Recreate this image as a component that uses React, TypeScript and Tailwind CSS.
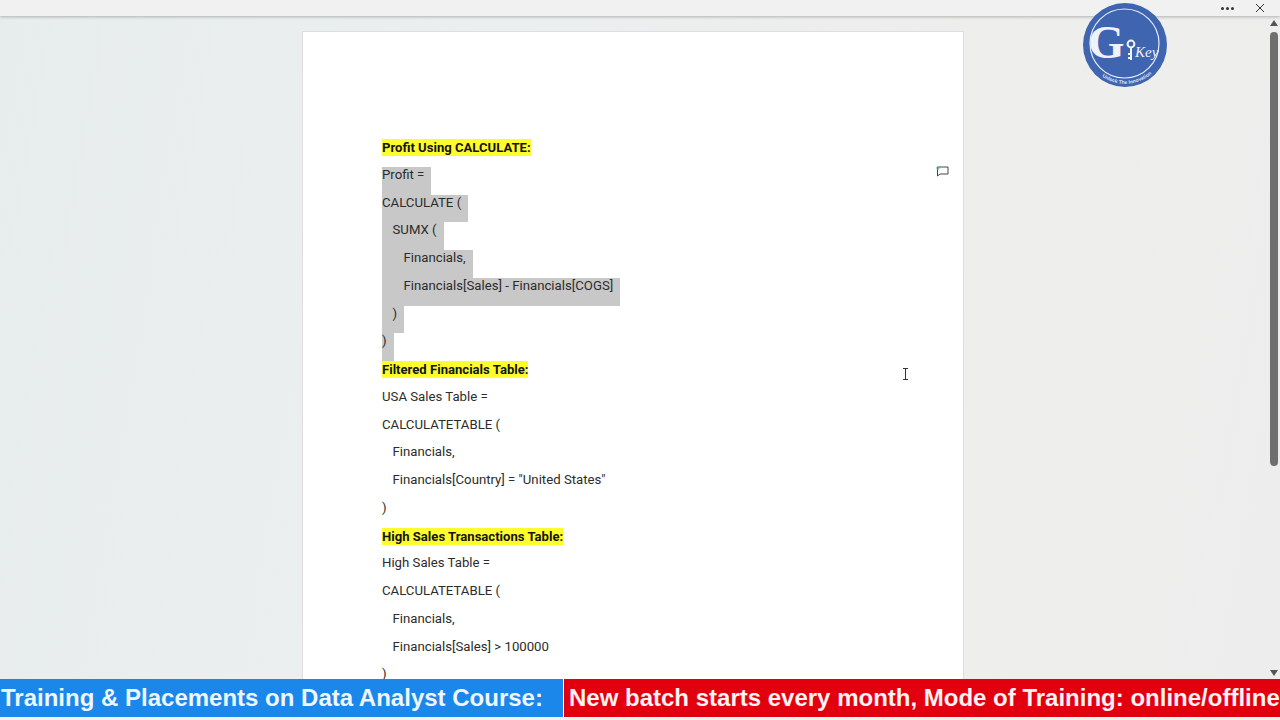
const F = "[font-family:'Roboto','Liberation_Sans',sans-serif]";

type Line = { t: string; kind?: "head" | "sel"; indent?: number };

const lines: Line[] = [
  { t: "Profit Using CALCULATE:", kind: "head" },
  { t: "Profit =", kind: "sel" },
  { t: "CALCULATE (", kind: "sel" },
  { t: "SUMX (", kind: "sel", indent: 10.5 },
  { t: "Financials,", kind: "sel", indent: 21.5 },
  { t: "Financials[Sales] - Financials[COGS]", kind: "sel", indent: 21.5 },
  { t: ")", kind: "sel", indent: 10.5 },
  { t: ")", kind: "sel" },
  { t: "Filtered Financials Table:", kind: "head" },
  { t: "USA Sales Table =" },
  { t: "CALCULATETABLE (" },
  { t: "Financials,", indent: 10.5 },
  { t: 'Financials[Country] = "United States"', indent: 10.5 },
  { t: ")" },
  { t: "High Sales Transactions Table:", kind: "head" },
  { t: "High Sales Table =" },
  { t: "CALCULATETABLE (" },
  { t: "Financials,", indent: 10.5 },
  { t: "Financials[Sales] > 100000", indent: 10.5 },
  { t: ")" },
];

function DocLine({ l }: { l: Line }) {
  if (l.kind === "head") {
    return (
      <div className="h-[27.75px] flex items-start">
        <span className="bg-[#fdfd2e] h-[17px] leading-[17px] font-bold text-[13.1px] text-[#141414]">{l.t}</span>
      </div>
    );
  }
  if (l.kind === "sel") {
    return (
      <div className="h-[27.75px] flex">
        <div className="bg-[#c8c8c8] h-full pr-[7px]" style={{ paddingLeft: l.indent ?? 0 }}>
          <span className="block h-[16px] leading-[16px] text-[13.2px] text-[#2c2c2c]">{l.t}</span>
        </div>
      </div>
    );
  }
  return (
    <div className="h-[27.75px]" style={{ paddingLeft: l.indent ?? 0 }}>
      <span className="block h-[16px] leading-[16px] text-[13.2px] text-[#2c2c2c]">{l.t}</span>
    </div>
  );
}

function Logo() {
  return (
    <svg viewBox="0 0 84 84" className="w-[84px] h-[84px]">
      <circle cx="42" cy="42" r="42" fill="#3f64b0" />
      <circle cx="41.5" cy="40.5" r="34.5" fill="none" stroke="#e8eef8" strokeWidth="1.2" />
      <text x="5" y="55" fill="#eef2fa" fontSize="47" fontWeight="700" fontFamily="'Liberation Serif',serif">G</text>
      <g fill="none" stroke="#f2f5fb" strokeWidth="2">
        <circle cx="48" cy="41" r="3.4" />
        <path d="M48 45 V57 M48 51 H45 M48 55 H45" />
      </g>
      <text x="52" y="54" fill="#eef2fa" fontSize="15" fontStyle="italic" fontFamily="'Liberation Serif',serif">Key</text>
      <path id="arc" d="M14 70 Q42 92 70 70" fill="none" />
      <text fontSize="5" fontWeight="700" fill="#dfe6f4" fontFamily="'Liberation Sans',sans-serif">
        <textPath href="#arc" startOffset="6">Unlock The Innovation</textPath>
      </text>
    </svg>
  );
}

export default function App() {
  return (
    <div className={`relative w-[1280px] h-[720px] overflow-hidden flex flex-col ${F} bg-[linear-gradient(100deg,#e7eced_0%,#ebefef_35%,#eeeeec_75%,#ededed_100%)]`}>
      {/* Top bar */}
      <div className="h-[16px] shrink-0 bg-[#f1f1f1] shadow-[0_1px_3px_rgba(0,0,0,0.25)] flex items-center justify-end z-10">
        <div className="flex gap-[2px] mr-[21px]">
          <span className="w-[3px] h-[3px] rounded-full bg-[#333]" />
          <span className="w-[3px] h-[3px] rounded-full bg-[#333]" />
          <span className="w-[3px] h-[3px] rounded-full bg-[#333]" />
        </div>
        <svg viewBox="0 0 10 10" className="w-[10px] h-[10px] mr-[15px]" stroke="#333" strokeWidth="1" fill="none">
          <path d="M1 1 L9 9 M9 1 L1 9" />
        </svg>
      </div>

      <div className="flex flex-1 min-h-0">
        {/* Document area */}
        <div className="flex-1 min-w-0 pl-[302px] pt-[15px] overflow-hidden">
          <div className="w-[662px] h-[700px] bg-white border border-[#dedede] pt-[107px] pl-[79px]">
            {lines.map((l, i) => (
              <DocLine key={i} l={l} />
            ))}
          </div>
        </div>
        {/* Scrollbar */}
        <div className="w-[12px] shrink-0 flex flex-col items-center pt-[4px]">
          <svg viewBox="0 0 8 6" className="w-[8px] h-[6px]"><path d="M4 0 L8 6 H0 Z" fill="#555" /></svg>
          <div className="w-[8px] h-[434px] mt-[6px] rounded-full bg-[#6f6f6f]" />
          <div className="flex-1" />
          <svg viewBox="0 0 8 6" className="w-[8px] h-[6px] mb-[44px]"><path d="M0 0 H8 L4 6 Z" fill="#555" /></svg>
        </div>
      </div>

      {/* Comment icon */}
      <svg viewBox="0 0 14 12" className="absolute left-[935px] top-[165px] w-[14px] h-[12px]" fill="none" stroke="#444" strokeWidth="1">
        <path d="M3 2 H13 V9 H5 L2.5 11 V2" />
        <path d="M1 3 H5 M3 1 V5" stroke="#4caf9a" />
      </svg>

      {/* Text cursor */}
      <svg viewBox="0 0 7 12" className="absolute left-[902px] top-[368px] w-[7px] h-[12px]" fill="none" stroke="#333" strokeWidth="1">
        <path d="M1 0.5 H6 M1 11.5 H6 M3.5 0.5 V11.5" />
      </svg>

      {/* Logo */}
      <div className="absolute left-[1083px] top-[3px] z-20">
        <Logo />
      </div>

      {/* Ticker banner */}
      <div className="absolute left-0 right-0 top-[679px] h-[38px] flex [font-family:'Liberation_Sans',sans-serif] font-bold text-[24px] whitespace-nowrap overflow-hidden">
        <div className="w-[563px] shrink-0 bg-[#1b87ea] text-[#eef6ff] flex items-center pl-[1px]">
          Training &amp; Placements on Data Analyst Course:
        </div>
        <div className="flex-1 ml-[1px] bg-[#e2000f] text-[#fff2f2] flex items-center pl-[5px]">
          New batch starts every month, Mode of Training: online/offline
        </div>
      </div>
      <div className="absolute left-0 right-0 top-[717px] h-[3px] bg-[#eef3f4]" />
    </div>
  );
}
